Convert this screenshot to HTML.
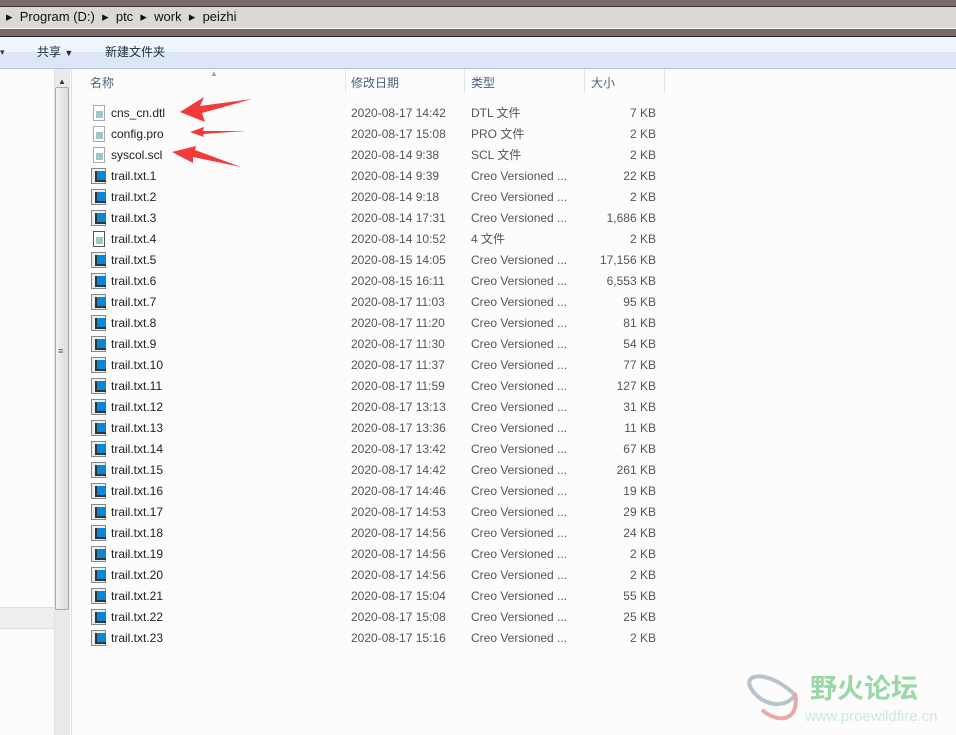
<!DOCTYPE html>
<html><head><meta charset="utf-8"><style>
*{margin:0;padding:0;box-sizing:border-box}
body{width:956px;height:735px;overflow:hidden;background:#fcfcfc;font-family:"Liberation Sans","Noto Sans CJK SC",sans-serif;font-size:12px;color:#1e1e1e;position:relative;line-height:15px}
.a{position:absolute}
.row{position:absolute;left:90px;height:21px;width:580px}
.row span{position:absolute;top:3px;white-space:nowrap;line-height:15px;height:15px}
.n{left:21px;color:#1e1e1e}.d{left:261px;color:#555}.t{left:381px;color:#555}.s{right:14px;color:#555}
.ic{position:absolute;left:1px;top:2px;width:15px;height:16px;border:1px solid #888;background:#eee}
.ic::after{content:"";position:absolute;left:3px;top:2px;width:9px;height:9px;background:#0a86d8;border-left:2px solid #333;border-bottom:2px solid #333}
.doc{position:absolute;left:3px;top:2px;width:12px;height:16px;border:1px solid #aaa;background:#fff}
.doc::after{content:"";position:absolute;left:2px;top:5px;width:7px;height:7px;background:#9ec8c8}
</style></head><body>
<div class="a" style="left:0;top:0;width:956px;height:6px;background:#7b6b69"></div>
<div class="a" style="left:0;top:6px;width:956px;height:1px;background:#333"></div>
<div class="a" style="left:0;top:7px;width:956px;height:21px;background:#dcd8d4"></div>
<div class="a" style="left:0;top:28px;width:956px;height:1px;background:#fff"></div>
<div class="a" style="left:0;top:29px;width:956px;height:7px;background:#7a6766"></div>
<div class="a" style="left:0;top:36px;width:956px;height:1px;background:#222"></div>
<div class="a" style="left:0;top:37px;width:956px;height:15px;background:#eff6fd"></div>
<div class="a" style="left:0;top:52px;width:956px;height:16px;background:#dce6f4"></div>
<div class="a" style="left:0;top:68px;width:956px;height:1px;background:#b5c6d8"></div>
<div class="a" style="left:6px;top:9px;font-size:13px;color:#111;white-space:nowrap">▸ &nbsp;Program (D:) &nbsp;▸ &nbsp;ptc &nbsp;▸ &nbsp;work &nbsp;▸ &nbsp;peizhi</div>
<div class="a" style="left:0;top:45px;font-size:9px;color:#334">▾</div>
<div class="a" style="left:37px;top:45px;color:#1e2a3a">共享 <span style="font-size:9px">▼</span></div>
<div class="a" style="left:105px;top:45px;color:#1e2a3a">新建文件夹</div>
<div class="a" style="left:0;top:607px;width:54px;height:22px;background:#efefef;border-top:1px solid #ddd;border-bottom:1px solid #ddd"></div>
<div class="a" style="left:54px;top:69px;width:16px;height:666px;background:#eaeaea;border-left:1px solid #e0e0e0"></div>
<div class="a" style="left:58px;top:74px;font-size:8px;color:#333">▲</div>
<div class="a" style="left:55px;top:87px;width:14px;height:523px;background:linear-gradient(90deg,#f2f2f2,#dadada);border:1px solid #aaa;border-radius:2px"></div>
<div class="a" style="left:58px;top:344px;font-size:9px;color:#555">≡</div>
<div class="a" style="left:71px;top:69px;width:1px;height:666px;background:#d8e0ea"></div>
<div class="a" style="left:90px;top:76px;color:#4c607a">名称</div>
<div class="a" style="left:210px;top:66px;font-size:8px;color:#8aa">▲</div>
<div class="a" style="left:345px;top:69px;width:1px;height:24px;background:#e0e6ee"></div>
<div class="a" style="left:351px;top:76px;color:#4c607a">修改日期</div>
<div class="a" style="left:464px;top:69px;width:1px;height:24px;background:#e0e6ee"></div>
<div class="a" style="left:471px;top:76px;color:#4c607a">类型</div>
<div class="a" style="left:584px;top:69px;width:1px;height:24px;background:#e0e6ee"></div>
<div class="a" style="left:591px;top:76px;color:#4c607a">大小</div>
<div class="a" style="left:664px;top:69px;width:1px;height:24px;background:#e0e6ee"></div>
<div class="row" style="top:103px"><i class="doc"></i><span class="n">cns_cn.dtl</span><span class="d">2020-08-17 14:42</span><span class="t">DTL 文件</span><span class="s">7 KB</span></div>
<div class="row" style="top:124px"><i class="doc"></i><span class="n">config.pro</span><span class="d">2020-08-17 15:08</span><span class="t">PRO 文件</span><span class="s">2 KB</span></div>
<div class="row" style="top:145px"><i class="doc"></i><span class="n">syscol.scl</span><span class="d">2020-08-14 9:38</span><span class="t">SCL 文件</span><span class="s">2 KB</span></div>
<div class="row" style="top:166px"><i class="ic"></i><span class="n">trail.txt.1</span><span class="d">2020-08-14 9:39</span><span class="t">Creo Versioned ...</span><span class="s">22 KB</span></div>
<div class="row" style="top:187px"><i class="ic"></i><span class="n">trail.txt.2</span><span class="d">2020-08-14 9:18</span><span class="t">Creo Versioned ...</span><span class="s">2 KB</span></div>
<div class="row" style="top:208px"><i class="ic"></i><span class="n">trail.txt.3</span><span class="d">2020-08-14 17:31</span><span class="t">Creo Versioned ...</span><span class="s">1,686 KB</span></div>
<div class="row" style="top:229px"><i class="doc" style="border-color:#555"></i><span class="n">trail.txt.4</span><span class="d">2020-08-14 10:52</span><span class="t">4 文件</span><span class="s">2 KB</span></div>
<div class="row" style="top:250px"><i class="ic"></i><span class="n">trail.txt.5</span><span class="d">2020-08-15 14:05</span><span class="t">Creo Versioned ...</span><span class="s">17,156 KB</span></div>
<div class="row" style="top:271px"><i class="ic"></i><span class="n">trail.txt.6</span><span class="d">2020-08-15 16:11</span><span class="t">Creo Versioned ...</span><span class="s">6,553 KB</span></div>
<div class="row" style="top:292px"><i class="ic"></i><span class="n">trail.txt.7</span><span class="d">2020-08-17 11:03</span><span class="t">Creo Versioned ...</span><span class="s">95 KB</span></div>
<div class="row" style="top:313px"><i class="ic"></i><span class="n">trail.txt.8</span><span class="d">2020-08-17 11:20</span><span class="t">Creo Versioned ...</span><span class="s">81 KB</span></div>
<div class="row" style="top:334px"><i class="ic"></i><span class="n">trail.txt.9</span><span class="d">2020-08-17 11:30</span><span class="t">Creo Versioned ...</span><span class="s">54 KB</span></div>
<div class="row" style="top:355px"><i class="ic"></i><span class="n">trail.txt.10</span><span class="d">2020-08-17 11:37</span><span class="t">Creo Versioned ...</span><span class="s">77 KB</span></div>
<div class="row" style="top:376px"><i class="ic"></i><span class="n">trail.txt.11</span><span class="d">2020-08-17 11:59</span><span class="t">Creo Versioned ...</span><span class="s">127 KB</span></div>
<div class="row" style="top:397px"><i class="ic"></i><span class="n">trail.txt.12</span><span class="d">2020-08-17 13:13</span><span class="t">Creo Versioned ...</span><span class="s">31 KB</span></div>
<div class="row" style="top:418px"><i class="ic"></i><span class="n">trail.txt.13</span><span class="d">2020-08-17 13:36</span><span class="t">Creo Versioned ...</span><span class="s">11 KB</span></div>
<div class="row" style="top:439px"><i class="ic"></i><span class="n">trail.txt.14</span><span class="d">2020-08-17 13:42</span><span class="t">Creo Versioned ...</span><span class="s">67 KB</span></div>
<div class="row" style="top:460px"><i class="ic"></i><span class="n">trail.txt.15</span><span class="d">2020-08-17 14:42</span><span class="t">Creo Versioned ...</span><span class="s">261 KB</span></div>
<div class="row" style="top:481px"><i class="ic"></i><span class="n">trail.txt.16</span><span class="d">2020-08-17 14:46</span><span class="t">Creo Versioned ...</span><span class="s">19 KB</span></div>
<div class="row" style="top:502px"><i class="ic"></i><span class="n">trail.txt.17</span><span class="d">2020-08-17 14:53</span><span class="t">Creo Versioned ...</span><span class="s">29 KB</span></div>
<div class="row" style="top:523px"><i class="ic"></i><span class="n">trail.txt.18</span><span class="d">2020-08-17 14:56</span><span class="t">Creo Versioned ...</span><span class="s">24 KB</span></div>
<div class="row" style="top:544px"><i class="ic"></i><span class="n">trail.txt.19</span><span class="d">2020-08-17 14:56</span><span class="t">Creo Versioned ...</span><span class="s">2 KB</span></div>
<div class="row" style="top:565px"><i class="ic"></i><span class="n">trail.txt.20</span><span class="d">2020-08-17 14:56</span><span class="t">Creo Versioned ...</span><span class="s">2 KB</span></div>
<div class="row" style="top:586px"><i class="ic"></i><span class="n">trail.txt.21</span><span class="d">2020-08-17 15:04</span><span class="t">Creo Versioned ...</span><span class="s">55 KB</span></div>
<div class="row" style="top:607px"><i class="ic"></i><span class="n">trail.txt.22</span><span class="d">2020-08-17 15:08</span><span class="t">Creo Versioned ...</span><span class="s">25 KB</span></div>
<div class="row" style="top:628px"><i class="ic"></i><span class="n">trail.txt.23</span><span class="d">2020-08-17 15:16</span><span class="t">Creo Versioned ...</span><span class="s">2 KB</span></div>
<svg class="a" style="left:0;top:0" width="956" height="735">
<polygon points="180,112 204,97 200,106 252,99 202,113 205,122" fill="#f23a3a"/>
<polygon points="190,132 204,127 203,131 246,131 203,134 204,137" fill="#f23a3a"/>
<polygon points="172,152 196,146 195,150 241,167 193,157 193,163" fill="#f23a3a"/>
<path d="M795,695 C770,670 740,672 752,690 C762,705 785,710 795,695" fill="none" stroke="#b8c4cc" stroke-width="4"/>
<path d="M795,693 C800,720 780,725 762,710" fill="none" stroke="#eaa8a8" stroke-width="4"/>
<text x="810" y="698" font-family="Noto Sans CJK SC,sans-serif" font-weight="bold" font-size="27" fill="#9ad8a6">野火论坛</text>
<text x="805" y="721" font-family="Liberation Sans,sans-serif" font-size="15" fill="#cfe6e6">www.proewildfire.cn</text>
</svg>
</body></html>
